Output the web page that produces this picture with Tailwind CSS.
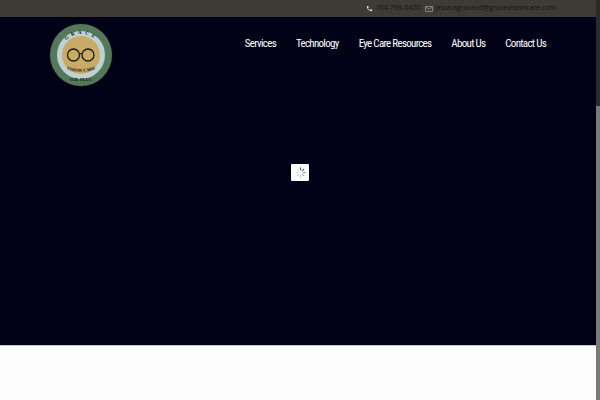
<!DOCTYPE html>
<html lang="en">
<head>
  <meta charset="UTF-8" />
  <title>Grace Vision Care</title>
  <script src="https://cdn.jsdelivr.net/npm/@tailwindcss/browser@4"></script>
</head>
<body class="relative h-[400px] w-[600px] overflow-hidden bg-[#fcfcfc] font-['Roboto',sans-serif]">

  <!-- TOP BAR -->
  <div class="flex h-[17px] items-center justify-end gap-[5px] bg-[#3e3a34] pr-[44px] font-['Open_Sans',sans-serif] text-[7px] text-[#15130f]">
    <div class="flex items-center gap-[3px]">
      <svg class="h-[7px] w-[7px] fill-[#e8e8e8]" viewBox="0 0 24 24"><path d="M6.6 10.8c1.4 2.8 3.800 5.100 6.600 6.600l2.200-2.200c.3-.3.700-.4 1-.2 1.100.4 2.300.6 3.600.6.600 0 1 .4 1 1V20c0 .6-.4 1-1 1C10.600 21 3 13.400 3 4c0-.6.4-1 1-1h3.500c.6 0 1 .4 1 1 0 1.300.2 2.500.6 3.600.1.300 0 .7-.2 1z"/></svg>
      <span>704-799-0420</span>
    </div>
    <div class="flex items-center gap-[2px]">
      <svg class="h-[8px] w-[8px] fill-none stroke-[#a8a59f] stroke-2" viewBox="0 0 24 24"><rect x="2" y="5" width="20" height="14"/><path d="M2 6l10 7 10-7"/></svg>
      <span>jessicagraceod@gracevisioncare.com</span>
    </div>
  </div>

  <!-- HERO -->
  <header class="relative h-[329px] border-b border-[#c9c9d2] bg-[#000016]">
    <nav class="flex items-start justify-between pl-[49px] pr-[54px]">
      <svg class="mt-[6px] h-[64px] w-[64px]" viewBox="0 0 64 64">
        <circle cx="32" cy="32" r="32" fill="#0b0d18"/>
        <circle cx="32" cy="32" r="31" fill="#55785a"/>
        <circle cx="32" cy="32" r="24" fill="#bcd2d4"/>
        <circle cx="32" cy="32" r="19" fill="#c9ab67"/>
        <circle cx="24.500" cy="32" r="6" fill="none" stroke="#1d1a12" stroke-width="1.300"/>
        <circle cx="39" cy="32" r="6" fill="none" stroke="#1d1a12" stroke-width="1.300"/>
        <path d="M30.500 31q1.300-1 2.600 0" fill="none" stroke="#1d1a12" stroke-width="1.100"/>
        <path id="arcTop" d="M12 27a20.500 20.500 0 0 1 40 0" fill="none"/>
        <path id="arcBottom" d="M13 44q19 10 38 0" fill="none"/>
        <text font-family="Liberation Serif, serif" font-size="5" font-weight="700" fill="#10130f" letter-spacing="3"><textPath href="#arcTop" startOffset="50%" text-anchor="middle">GRACE</textPath></text>
        <text font-family="Liberation Serif, serif" font-size="4.500" font-weight="700" fill="#10130f"><textPath href="#arcBottom" startOffset="50%" text-anchor="middle">VISION CARE</textPath></text>
        <text x="32" y="58" text-anchor="middle" font-family="Liberation Serif, serif" font-size="4.500" font-weight="700" fill="#10130f">O.D. PLLC</text>
      </svg>
      <div class="flex h-[54px] items-center gap-[20px] text-[11px] tracking-[-0.7px] text-white [font-stretch:75%]">
        <a href="#">Services</a>
        <a href="#">Technology</a>
        <a href="#">Eye Care Resources</a>
        <a href="#">About Us</a>
        <a href="#">Contact Us</a>
      </div>
    </nav>

    <!-- loading spinner -->
    <div class="absolute left-[291px] top-[147px] flex h-[17px] w-[18px] items-center justify-center rounded-[1px] bg-white">
      <svg class="h-[11px] w-[11px]" viewBox="0 0 12 12" stroke-width="1.300" stroke-linecap="round">
        <path d="M6 1v2" stroke="#555"/>
        <path d="M9.500 2.500L8.100 3.900" stroke="#666"/>
        <path d="M11 6H9" stroke="#888"/>
        <path d="M9.500 9.500L8.100 8.100" stroke="#aaa"/>
        <path d="M6 11V9" stroke="#bbb"/>
        <path d="M2.500 9.500L3.900 8.100" stroke="#ccc"/>
        <path d="M1 6h2" stroke="#ddd"/>
        <path d="M2.500 2.500L3.900 3.900" stroke="#e5e5e5"/>
      </svg>
    </div>
  </header>

  <!-- scrollbar -->
  <div class="absolute right-0 top-0 h-full w-[4px] bg-[#2a2a2a]">
    <div class="mt-[106px] h-[294px] bg-[#7a7a7a]"></div>
  </div>
</body>
</html>
